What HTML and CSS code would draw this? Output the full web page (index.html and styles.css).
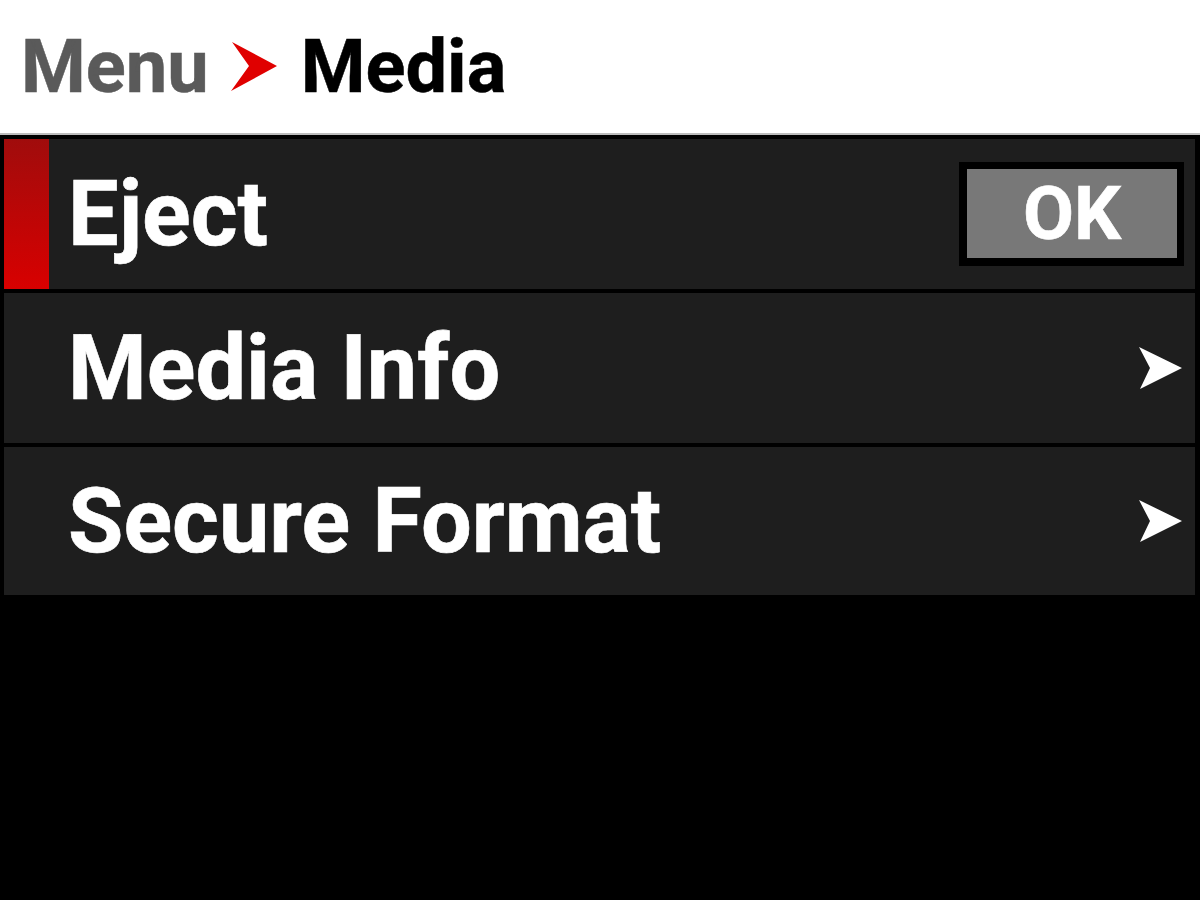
FILE: index.html
```html
<!DOCTYPE html>
<html>
<head>
<meta charset="utf-8">
<link rel="stylesheet" href="styles.css">
</head>
<body>
<div class="screen">
  <header class="crumbs">
    <span class="crumb-parent">Menu</span>
    <svg class="crumb-arrow" width="50" height="52" viewBox="0 0 50 52"><path d="M3 1 L48 25 L2 50 L20 25 Z" fill="#e00000"/></svg>
    <span class="crumb-current">Media</span>
  </header>
  <div class="list">
    <div class="row row-selected">
      <div class="marker"></div>
      <span class="label">Eject</span>
      <div class="ok-wrap"><div class="ok">OK</div></div>
    </div>
    <div class="row">
      <div class="marker-space"></div>
      <span class="label">Media Info</span>
      <svg class="chev" width="46" height="46" viewBox="0 0 46 46"><path d="M1 2 L44 23 L2 44 L12 23 Z" fill="#ffffff"/></svg>
    </div>
    <div class="row row-last">
      <div class="marker-space"></div>
      <span class="label">Secure Format</span>
      <svg class="chev" width="46" height="46" viewBox="0 0 46 46"><path d="M1 2 L44 23 L2 44 L12 23 Z" fill="#ffffff"/></svg>
    </div>
  </div>
</div>
</body>
</html>
```

FILE: styles.css
```css
html, body {
  margin: 0;
  padding: 0;
  background: #000;
}
.screen {
  width: 1200px;
  height: 900px;
  background: #000;
  font-family: Roboto, "Liberation Sans", sans-serif;
  font-weight: 700;
}
.crumbs {
  height: 135px;
  background: #fff;
  display: flex;
  align-items: center;
  padding-left: 21px;
  box-sizing: border-box;
  border-bottom: 2px solid #bdbdbd;
}
.crumb-parent {
  color: #5a5a5a;
  font-size: 74px;
  -webkit-text-stroke: 0.5px #5a5a5a;
}
.crumb-arrow {
  margin: 0 22px 0 20px;
}
.crumb-current {
  color: #000;
  font-size: 74px;
  -webkit-text-stroke: 0.5px #000;
}
.list {
  display: flex;
  flex-direction: column;
  gap: 4px;
  padding: 4px 5px 0 4px;
}
.row {
  height: 150px;
  background: #1e1e1e;
  display: flex;
  align-items: center;
  color: #fff;
}
.row-last {
  height: 148px;
}
.marker {
  width: 45px;
  align-self: stretch;
  background: linear-gradient(#a00c0c, #d80000);
}
.marker-space {
  width: 45px;
}
.label {
  margin-left: 19px;
  font-size: 90px;
  flex: 1;
  -webkit-text-stroke: 0.6px #fff;
}
.ok-wrap {
  background: #000;
  padding: 7px 7px 8px 8px;
  margin-right: 11px;
}
.ok {
  width: 210px;
  height: 89px;
  background: #787878;
  display: flex;
  align-items: center;
  justify-content: center;
  font-size: 74px;
  color: #fff;
  -webkit-text-stroke: 0.6px #fff;
}
.chev {
  margin-right: 11px;
}
```
